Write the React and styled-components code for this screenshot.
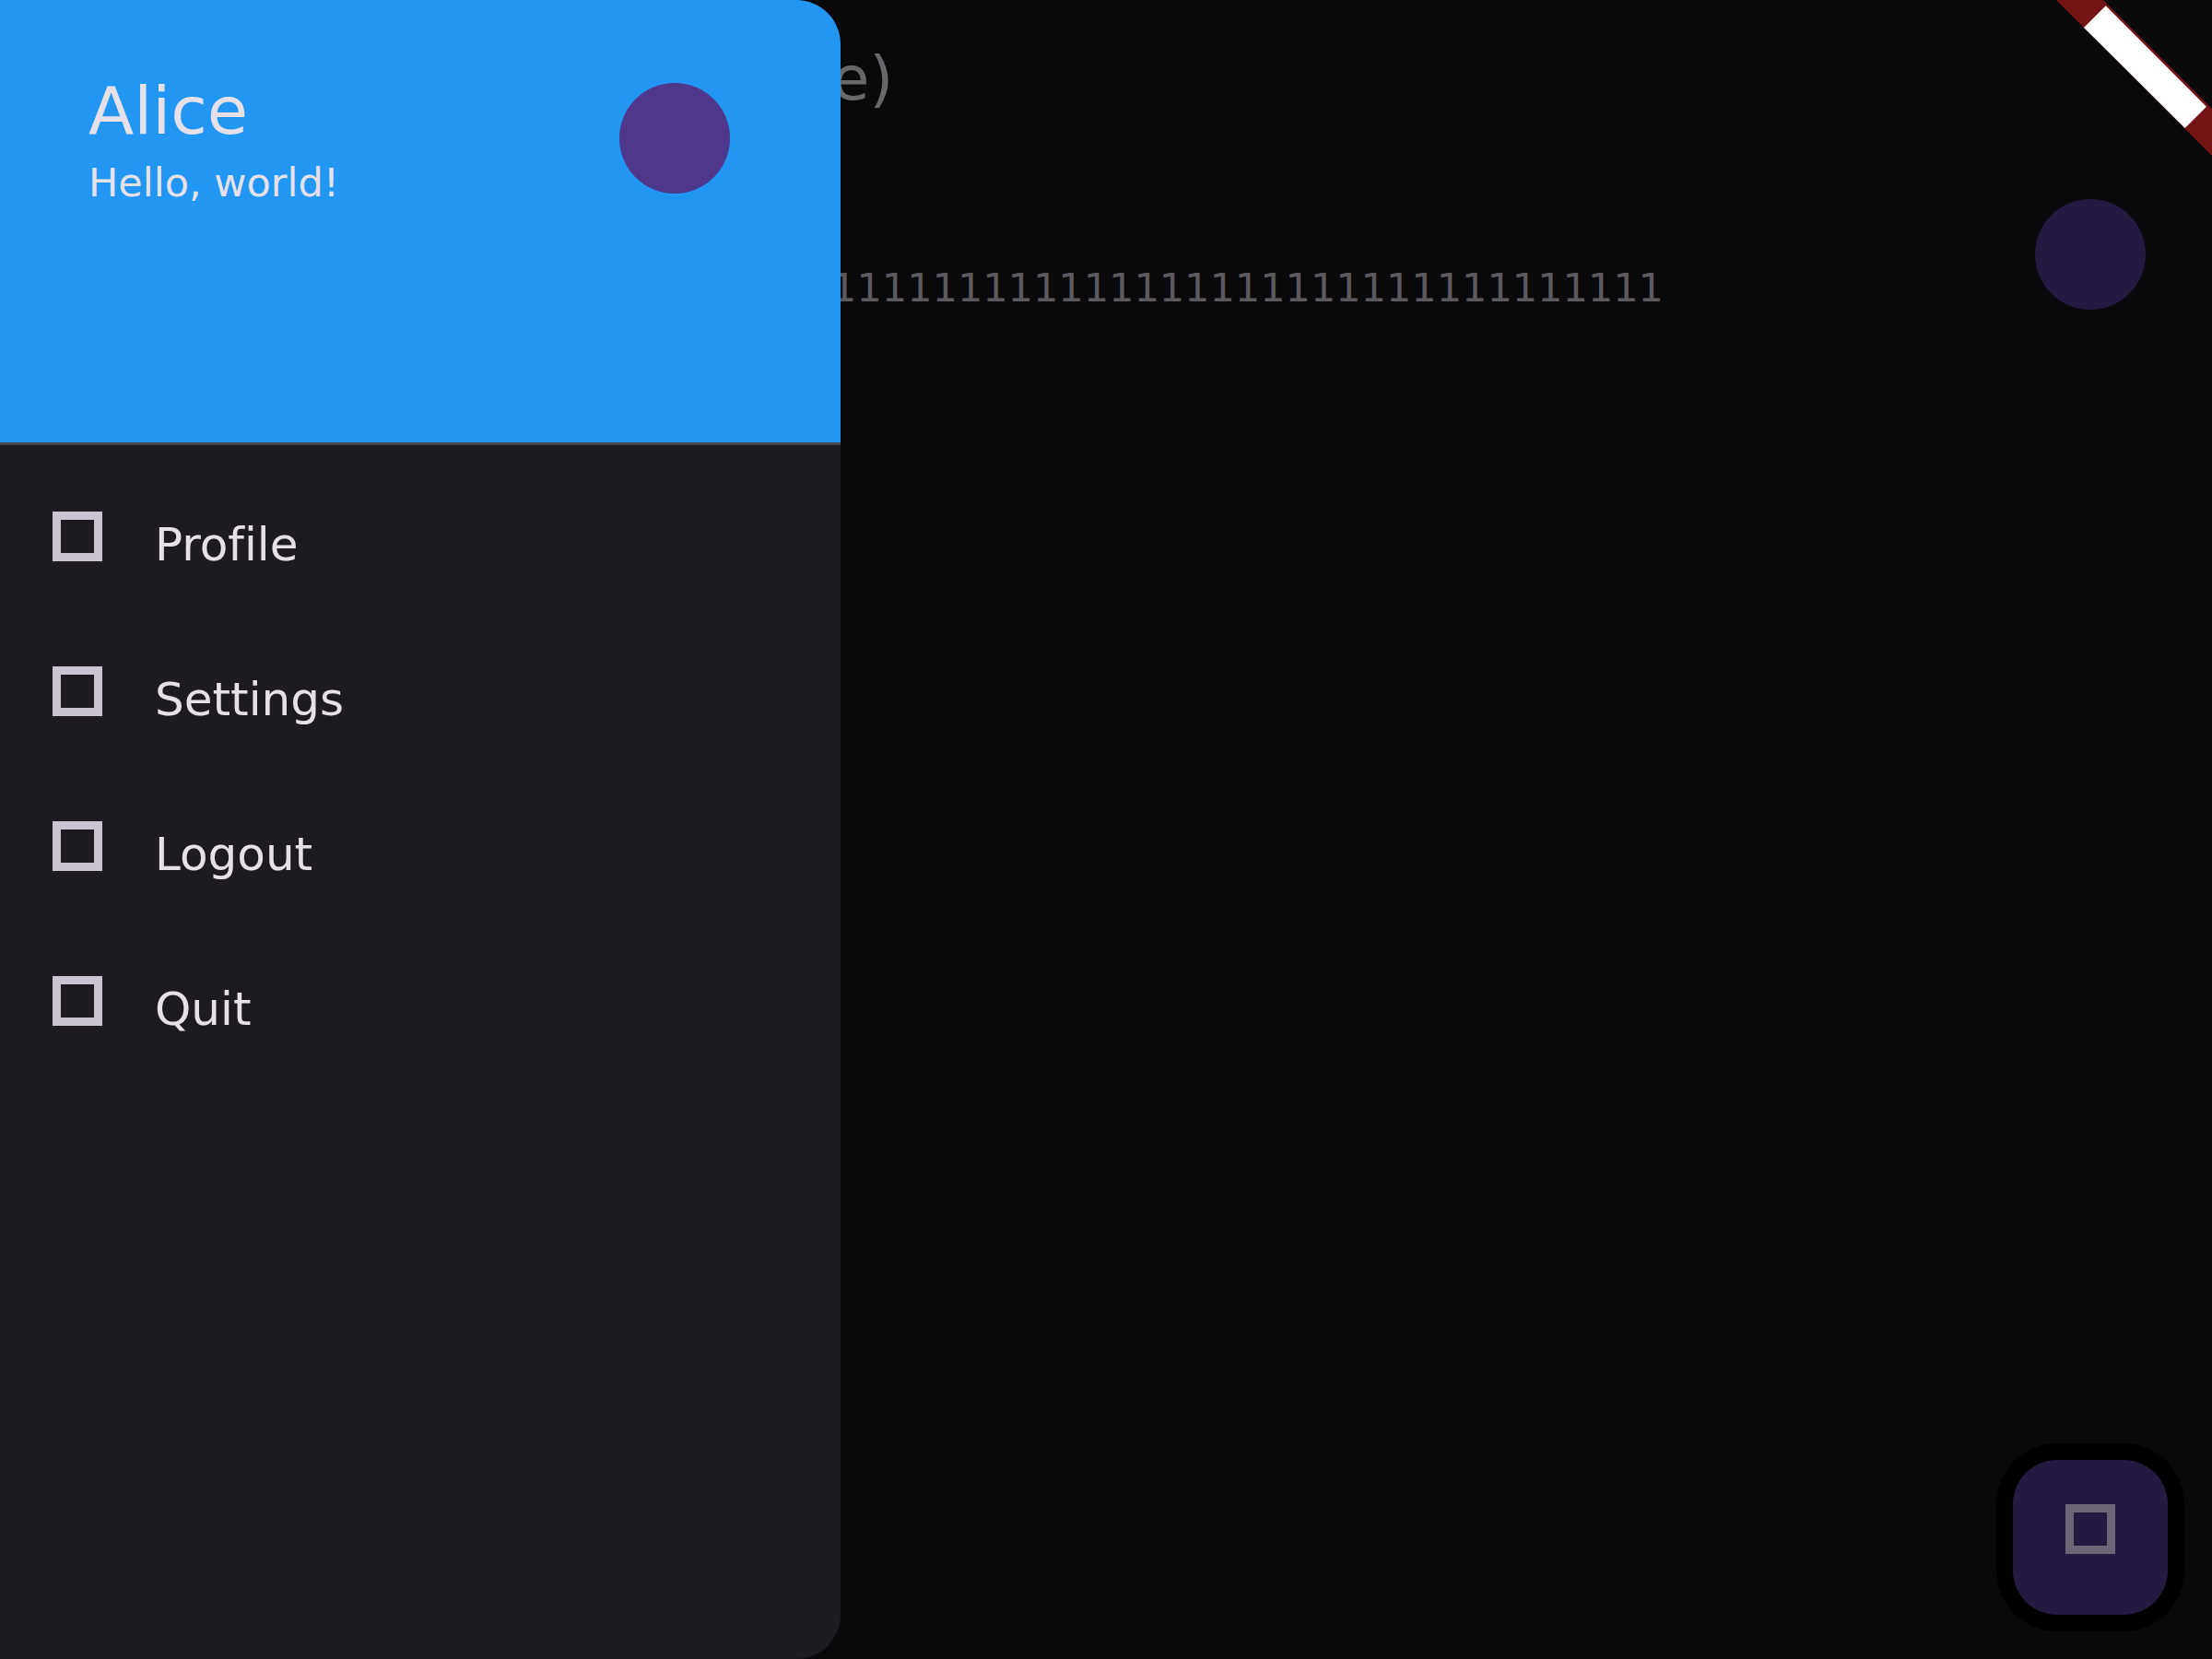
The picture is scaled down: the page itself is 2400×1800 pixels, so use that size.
import React from "react";
import styled, { createGlobalStyle } from "styled-components";

const GlobalStyle = createGlobalStyle`
  *, *::before, *::after {
    box-sizing: border-box;
  }
  body {
    margin: 0;
    background: #141218;
    color: #e6e0e9;
    font-family: "DejaVu Sans", sans-serif;
    font-variant-ligatures: none;
  }
  button {
    font: inherit;
    font-variant-ligatures: none;
    color: inherit;
    border: 0;
    background: none;
    cursor: pointer;
  }
`;

const Page = styled.main`
  min-height: 100vh;
`;

const AppBar = styled.header`
  display: flex;
  align-items: center;
  height: 168px;
  padding: 4px 48px 0 759px;
`;

const PageTitle = styled.h1`
  margin: 0;
  font-size: 66px;
  font-weight: 400;
  line-height: 84px;
`;

const Tile = styled.div`
  display: flex;
  align-items: center;
  gap: 48px;
  padding: ${(p) => p.$padding};
`;

const TileText = styled.div`
  flex: 1;
  min-width: 0;
  padding-top: ${(p) => (p.$offsetLine ? "72px" : "0")};
`;

const Name = styled.h2`
  margin: 0;
  font-size: 72px;
  font-weight: 400;
  line-height: 96px;
`;

const Message = styled.p`
  margin: 0;
  overflow: hidden;
  color: ${(p) => (p.$muted ? "#cac4d0" : "inherit")};
  font-size: 43px;
  line-height: 60px;
  white-space: nowrap;
`;

const Avatar = styled.div`
  flex: none;
  width: 120px;
  height: 120px;
  border-radius: 50%;
  background: #4f378b;
`;

const IconBox = styled.span`
  flex: none;
  display: flex;
  justify-content: center;
  width: 72px;
  height: 72px;

  &::before {
    content: "";
    width: 54px;
    height: 54px;
    border: 9px solid ${(p) => p.$color};
  }
`;

const Fab = styled.button`
  position: fixed;
  right: 48px;
  bottom: 48px;
  display: flex;
  align-items: center;
  justify-content: center;
  width: 168px;
  height: 168px;
  padding: 0;
  border-radius: 48px;
  background: #4f378b;
  box-shadow: 0 0 0 18px #000;
`;

const Scrim = styled.div`
  position: fixed;
  inset: 0;
  background: rgba(0, 0, 0, 0.54);
`;

const Drawer = styled.aside`
  position: fixed;
  inset: 0 auto 0 0;
  width: 912px;
  max-width: 100%;
  overflow: hidden;
  border-radius: 0 48px 48px 0;
  background: #1d1b20;
`;

const DrawerHeader = styled.header`
  height: 483px;
  padding: 72px 48px 0;
  border-bottom: 3px solid #49454f;
  background: #2196f3;
`;

const Menu = styled.nav`
  display: flex;
  flex-direction: column;
  padding: 24px 0;
`;

const MenuItem = styled.button`
  display: flex;
  align-items: center;
  gap: 48px;
  height: 168px;
  padding: 0 48px;
  font-size: 50px;
  line-height: 72px;
  text-align: left;
`;

const Banner = styled.svg`
  position: fixed;
  top: 0;
  right: 0;
  width: 180px;
  height: 180px;
  pointer-events: none;
`;

const menu = ["Profile", "Settings", "Logout", "Quit"];

export default function App() {
  return (
    <>
      <GlobalStyle />
      <Page>
        <AppBar>
          <PageTitle>(Alice)</PageTitle>
        </AppBar>
        <Tile $padding="42px 72px 42px 54px">
          <TileText $offsetLine>
            <Message $muted>{"1".repeat(64)}</Message>
          </TileText>
          <Avatar />
        </Tile>
        <Fab type="button" aria-label="Add">
          <IconBox $color="#eaddff" />
        </Fab>
      </Page>
      <Scrim />
      <Drawer>
        <DrawerHeader>
          <Tile $padding="0 72px 0 48px">
            <TileText>
              <Name>Alice</Name>
              <Message>Hello, world!</Message>
            </TileText>
            <Avatar />
          </Tile>
        </DrawerHeader>
        <Menu aria-label="Account">
          {menu.map((label) => (
            <MenuItem key={label} type="button">
              <IconBox $color="#cac4d0" />
              {label}
            </MenuItem>
          ))}
        </Menu>
      </Drawer>
      <Banner viewBox="0 0 180 180" aria-hidden="true">
        <path d="M11 0H62L180 118V169Z" fill="#751415" />
        <path d="M64.7 6.3 174 115.7 150.7 139 41 30Z" fill="#fff" />
      </Banner>
    </>
  );
}
